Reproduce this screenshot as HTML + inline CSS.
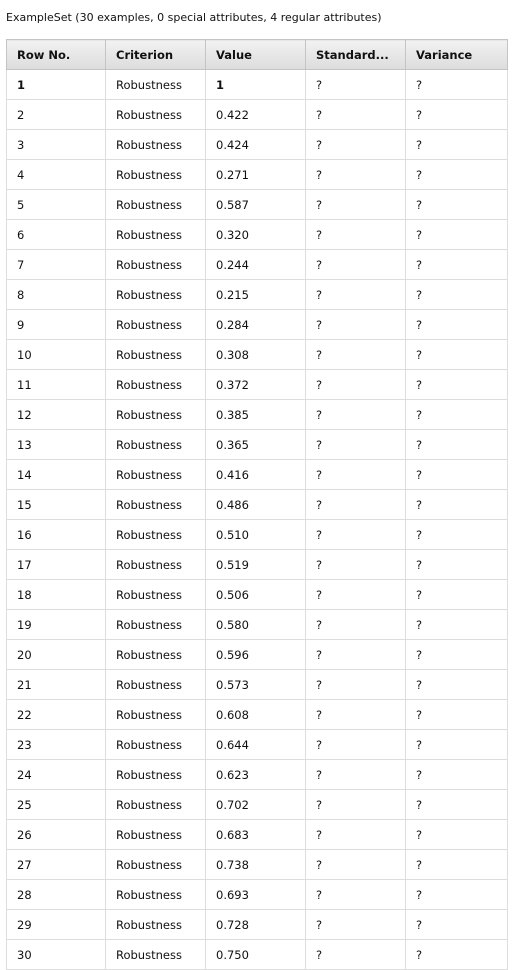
<!DOCTYPE html>
<html><head><style>
body{margin:0;background:#fff;font-family:"DejaVu Sans",Verdana,sans-serif;font-size:11.5px;color:#111;width:521px;height:949px;overflow:hidden}
.t{position:absolute;left:6px;top:11px;font-size:11px}
table{position:absolute;left:6px;top:39px;border-collapse:collapse;table-layout:fixed;width:501px}
td,th{border:1px solid #ddd;height:29px;padding:0 0 0 10px;text-align:left;white-space:nowrap;overflow:hidden}
th{background:linear-gradient(#f2f2f2,#dcdcdc);border-color:#c4c4c4;font-weight:bold;font-size:11.5px}
td.b{font-weight:bold}
</style></head><body>
<div class="t">ExampleSet (30 examples, 0 special attributes, 4 regular attributes)</div>
<table>
<colgroup><col style="width:99px"><col style="width:100px"><col style="width:100px"><col style="width:100px"><col style="width:102px"></colgroup>
<tr><th>Row No.</th><th>Criterion</th><th>Value</th><th>Standard...</th><th>Variance</th></tr>
<tr><td class="b">1</td><td>Robustness</td><td class="b">1</td><td>?</td><td>?</td></tr>
<tr><td>2</td><td>Robustness</td><td>0.422</td><td>?</td><td>?</td></tr>
<tr><td>3</td><td>Robustness</td><td>0.424</td><td>?</td><td>?</td></tr>
<tr><td>4</td><td>Robustness</td><td>0.271</td><td>?</td><td>?</td></tr>
<tr><td>5</td><td>Robustness</td><td>0.587</td><td>?</td><td>?</td></tr>
<tr><td>6</td><td>Robustness</td><td>0.320</td><td>?</td><td>?</td></tr>
<tr><td>7</td><td>Robustness</td><td>0.244</td><td>?</td><td>?</td></tr>
<tr><td>8</td><td>Robustness</td><td>0.215</td><td>?</td><td>?</td></tr>
<tr><td>9</td><td>Robustness</td><td>0.284</td><td>?</td><td>?</td></tr>
<tr><td>10</td><td>Robustness</td><td>0.308</td><td>?</td><td>?</td></tr>
<tr><td>11</td><td>Robustness</td><td>0.372</td><td>?</td><td>?</td></tr>
<tr><td>12</td><td>Robustness</td><td>0.385</td><td>?</td><td>?</td></tr>
<tr><td>13</td><td>Robustness</td><td>0.365</td><td>?</td><td>?</td></tr>
<tr><td>14</td><td>Robustness</td><td>0.416</td><td>?</td><td>?</td></tr>
<tr><td>15</td><td>Robustness</td><td>0.486</td><td>?</td><td>?</td></tr>
<tr><td>16</td><td>Robustness</td><td>0.510</td><td>?</td><td>?</td></tr>
<tr><td>17</td><td>Robustness</td><td>0.519</td><td>?</td><td>?</td></tr>
<tr><td>18</td><td>Robustness</td><td>0.506</td><td>?</td><td>?</td></tr>
<tr><td>19</td><td>Robustness</td><td>0.580</td><td>?</td><td>?</td></tr>
<tr><td>20</td><td>Robustness</td><td>0.596</td><td>?</td><td>?</td></tr>
<tr><td>21</td><td>Robustness</td><td>0.573</td><td>?</td><td>?</td></tr>
<tr><td>22</td><td>Robustness</td><td>0.608</td><td>?</td><td>?</td></tr>
<tr><td>23</td><td>Robustness</td><td>0.644</td><td>?</td><td>?</td></tr>
<tr><td>24</td><td>Robustness</td><td>0.623</td><td>?</td><td>?</td></tr>
<tr><td>25</td><td>Robustness</td><td>0.702</td><td>?</td><td>?</td></tr>
<tr><td>26</td><td>Robustness</td><td>0.683</td><td>?</td><td>?</td></tr>
<tr><td>27</td><td>Robustness</td><td>0.738</td><td>?</td><td>?</td></tr>
<tr><td>28</td><td>Robustness</td><td>0.693</td><td>?</td><td>?</td></tr>
<tr><td>29</td><td>Robustness</td><td>0.728</td><td>?</td><td>?</td></tr>
<tr><td>30</td><td>Robustness</td><td>0.750</td><td>?</td><td>?</td></tr>
</table>
</body></html>
